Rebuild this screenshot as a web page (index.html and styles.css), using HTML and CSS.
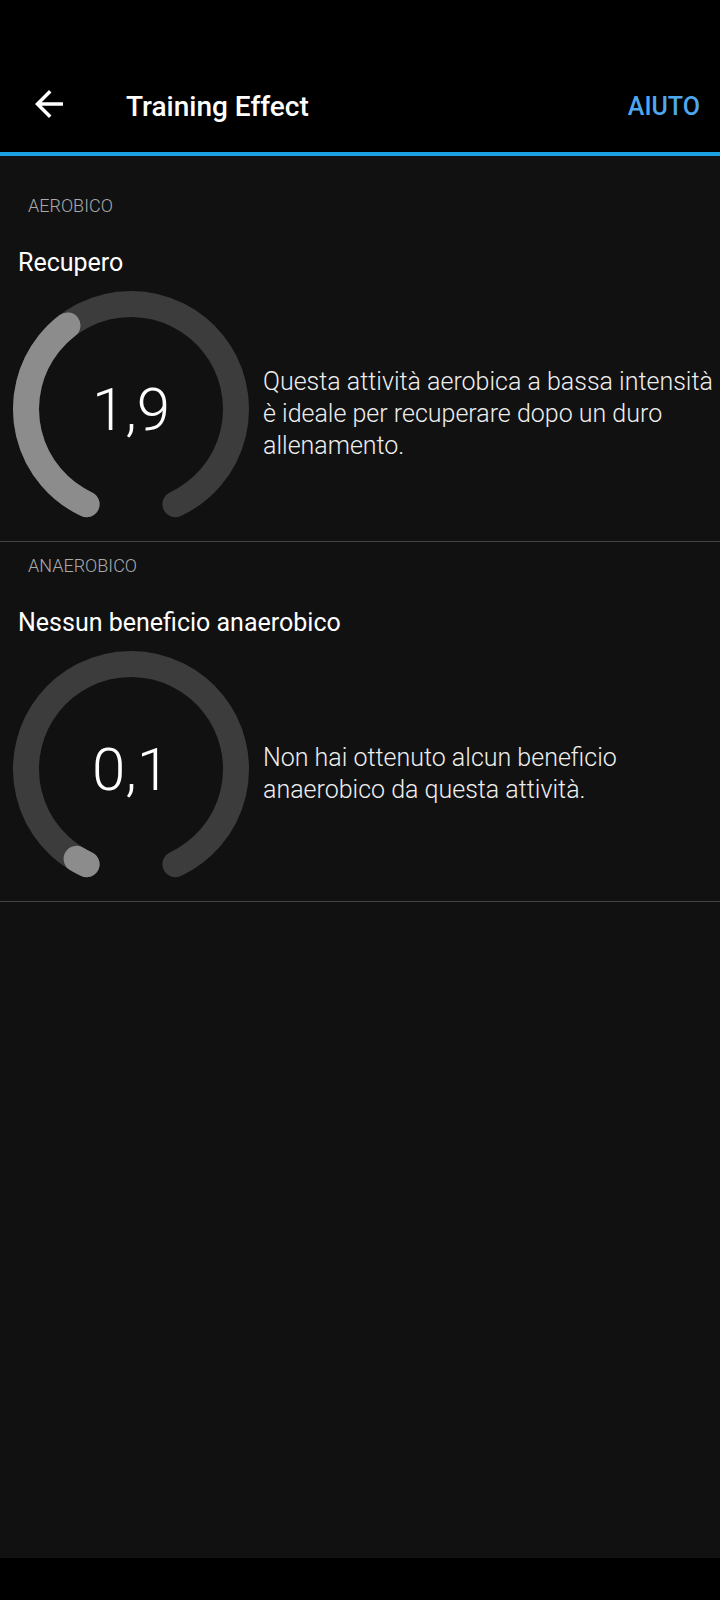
FILE: index.html
```html
<!DOCTYPE html>
<html lang="it">
<head>
  <meta charset="UTF-8">
  <meta name="viewport" content="width=device-width, initial-scale=1.0">
  <title>Training Effect</title>
  <link rel="stylesheet" href="styles.css">
</head>
<body>
  <header class="topbar">
    <div class="toolbar">
      <svg class="back" viewBox="0 0 24 24"><path d="M20 11H7.83l5.59-5.59L12 4l-8 8 8 8 1.41-1.41L7.83 13H20v-2z"/></svg>
      <h1>Training Effect</h1>
      <a class="help" href="#">AIUTO</a>
    </div>
  </header>

  <main class="content">
    <section class="effect first">
      <p class="label">AEROBICO</p>
      <h2>Recupero</h2>
      <div class="row">
        <div class="gauge">
          <svg viewBox="0 0 238 238">
            <path class="track" d="M74.6 214.2 A105 105 0 1 1 163.4 214.2"/>
            <path class="fill" pathLength="5" stroke-dasharray="1.9 10" d="M74.6 214.2 A105 105 0 1 1 163.4 214.2"/>
          </svg>
          <span class="value">1,9</span>
        </div>
        <p class="desc">Questa attività aerobica a bassa intensità è ideale per recuperare dopo un duro allenamento.</p>
      </div>
    </section>

    <section class="effect">
      <p class="label">ANAEROBICO</p>
      <h2>Nessun beneficio anaerobico</h2>
      <div class="row">
        <div class="gauge">
          <svg viewBox="0 0 238 238">
            <path class="track" d="M74.6 214.2 A105 105 0 1 1 163.4 214.2"/>
            <path class="fill" pathLength="5" stroke-dasharray="0.1 10" d="M74.6 214.2 A105 105 0 1 1 163.4 214.2"/>
          </svg>
          <span class="value">0,1</span>
        </div>
        <p class="desc">Non hai ottenuto alcun beneficio anaerobico da questa attività.</p>
      </div>
    </section>
  </main>

  <div class="navbar"></div>
</body>
</html>
```

FILE: styles.css
```css
* { margin: 0; padding: 0; box-sizing: border-box; font-family: 'Roboto', sans-serif; }
body { background-color: #000; color: #fff; width: 720px; height: 1600px; display: flex; flex-direction: column; }

.topbar { background-color: #000; padding-top: 60px; border-bottom: 4px solid #1ba0e2; }
.toolbar { height: 92px; display: flex; align-items: center; padding: 0 20px 0 28px; }
.back { width: 42px; height: 42px; fill: #fff; margin-top: -4px; }
.toolbar h1 { flex: 1; font-size: 28px; font-weight: 500; margin-left: 56px; letter-spacing: 0; }
.help { color: #4ea8f0; text-decoration: none; font-size: 25px; font-weight: 500; }

.content { flex: 1; background-color: #111; }
.effect { border-bottom: 1px solid #444; padding-bottom: 13px; }
.effect.first { padding-top: 26px; }
.label { font-size: 18px; font-weight: 300; color: #aaa; padding: 13px 0 0 28px; line-height: 22px; }
.effect h2 { font-size: 25px; font-weight: 400; padding: 31px 0 0 18px; line-height: 30px; }
.row { display: flex; align-items: center; margin-top: 12px; }

.gauge { position: relative; width: 238px; height: 238px; margin-left: 12px; flex-shrink: 0; }
.gauge svg { width: 238px; height: 238px; display: block; }
.gauge path { fill: none; stroke-width: 26; stroke-linecap: round; }
.track { stroke: #3c3c3c; }
.fill { stroke: #8c8c8c; }
.value { position: absolute; inset: 0; display: flex; align-items: center; justify-content: center; font-size: 60px; font-weight: 300; }

.desc { margin-left: 13px; font-size: 25px; font-weight: 300; line-height: 32px; color: #eee; padding-top: 10px; }

.navbar { height: 42px; background-color: #000; }
```
